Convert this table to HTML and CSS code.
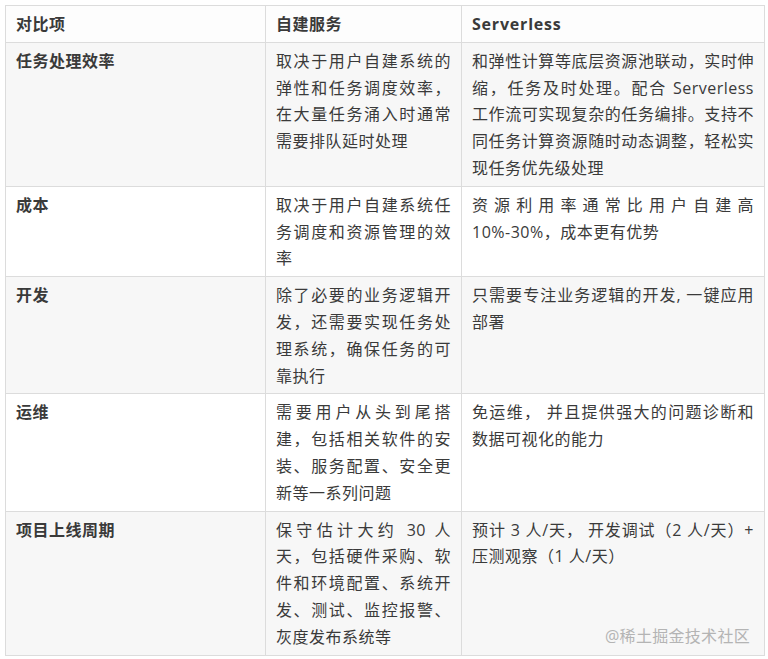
FILE: index.html
```html
<!DOCTYPE html>
<html lang="zh">
<head>
<meta charset="utf-8">
<link rel="stylesheet" href="styles.css">
</head>
<body>
<div class="wrap">
<table class="cmp">
<colgroup><col class="c1"><col class="c2"><col class="c3"></colgroup>
<thead>
<tr><th>对比项</th><th>自建服务</th><th class="latin">Serverless</th></tr>
</thead>
<tbody>
<tr><th>任务处理效率</th><td>取决于用户自建系统的弹性和任务调度效率，在大量任务涌入时通常需要排队延时处理</td><td>和弹性计算等底层资源池联动，实时伸缩，任务及时处理。配合 Serverless 工作流可实现复杂的任务编排。支持不同任务计算资源随时动态调整，轻松实现任务优先级处理</td></tr>
<tr><th>成本</th><td>取决于用户自建系统任务调度和资源管理的效率</td><td>资源利用率通常比用户自建高 10%-30%，成本更有优势</td></tr>
<tr><th>开发</th><td>除了必要的业务逻辑开发，还需要实现任务处理系统，确保任务的可靠执行</td><td>只需要专注业务逻辑的开发, 一键应用部署</td></tr>
<tr><th>运维</th><td>需要用户从头到尾搭建，包括相关软件的安装、服务配置、安全更新等一系列问题</td><td>免运维， 并且提供强大的问题诊断和数据可视化的能力</td></tr>
<tr><th>项目上线周期</th><td>保守估计大约 30 人天，包括硬件采购、软件和环境配置、系统开发、测试、监控报警、灰度发布系统等</td><td>预计 3 人/天， 开发调试（2 人/天）+ 压测观察（1 人/天）</td></tr>
</tbody>
</table>
<div class="mark">@稀土掘金技术社区</div>
</div>
</body>
</html>
```
FILE: styles.css
```css
html, body { margin: 0; padding: 0; background: #fff; }
body {
  font-family: "Open Sans", "Noto Sans CJK SC", sans-serif;
  color: #3a3a3a;
}
.wrap { position: relative; padding: 5px; }
.cmp {
  width: 759px;
  border-collapse: collapse;
  table-layout: fixed;
  font-size: 16px;
  line-height: 26.8px;
  letter-spacing: 0.5px;
}
.c1 { width: 260px; }
.c2 { width: 196px; }
.c3 { width: 303px; }
.cmp th, .cmp td {
  border: 1px solid #dcdcdc;
  padding: 5px 10px 4px 10px;
  vertical-align: top;
  text-align: justify;
}
.cmp th { font-weight: bold; text-align: left; }
.cmp thead tr { background: #fdfdfd; }
.cmp tbody tr:nth-child(odd) { background: #f7f7f7; }
.cmp tbody tr:nth-child(even) { background: #fff; }
.latin { letter-spacing: 0.8px; }
.mark {
  position: absolute;
  right: 18px;
  bottom: 14px;
  font-size: 16px;
  color: #b4b4b4;
  letter-spacing: 0.3px;
}
```
